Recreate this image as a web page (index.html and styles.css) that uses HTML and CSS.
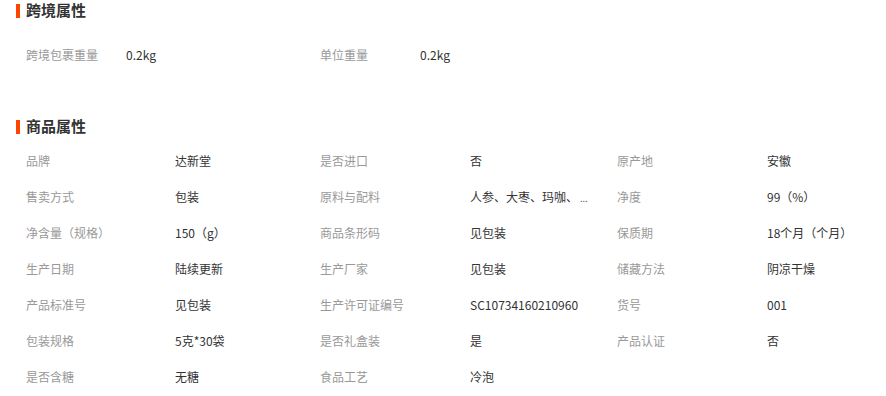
FILE: index.html
```html
<!DOCTYPE html>
<html lang="zh-CN">
<head>
<meta charset="utf-8">
<title>属性</title>
<link rel="stylesheet" href="styles.css">
</head>
<body>
<section class="sec sec-cross">
  <h2 class="sec-title"><span class="bar"></span><span class="sec-text">跨境属性</span></h2>
  <div class="grid grid-cross">
    <span class="lbl">跨境包裹重量</span><span class="val">0.2kg</span>
    <span class="lbl">单位重量</span><span class="val">0.2kg</span>
  </div>
</section>
<section class="sec sec-goods">
  <h2 class="sec-title"><span class="bar"></span><span class="sec-text">商品属性</span></h2>
  <div class="grid grid-goods">
    <span class="lbl">品牌</span><span class="val">达新堂</span>
    <span class="lbl">是否进口</span><span class="val">否</span>
    <span class="lbl">原产地</span><span class="val">安徽</span>

    <span class="lbl">售卖方式</span><span class="val">包装</span>
    <span class="lbl">原料与配料</span><span class="val">人参、大枣、玛咖、<span class="dots">...</span></span>
    <span class="lbl">净度</span><span class="val">99（%）</span>

    <span class="lbl">净含量（规格）</span><span class="val">150（g）</span>
    <span class="lbl">商品条形码</span><span class="val">见包装</span>
    <span class="lbl">保质期</span><span class="val">18个月（个月）</span>

    <span class="lbl">生产日期</span><span class="val">陆续更新</span>
    <span class="lbl">生产厂家</span><span class="val">见包装</span>
    <span class="lbl">储藏方法</span><span class="val">阴凉干燥</span>

    <span class="lbl">产品标准号</span><span class="val">见包装</span>
    <span class="lbl">生产许可证编号</span><span class="val">SC10734160210960</span>
    <span class="lbl">货号</span><span class="val">001</span>

    <span class="lbl">包装规格</span><span class="val">5克*30袋</span>
    <span class="lbl">是否礼盒装</span><span class="val">是</span>
    <span class="lbl">产品认证</span><span class="val">否</span>

    <span class="lbl">是否含糖</span><span class="val">无糖</span>
    <span class="lbl">食品工艺</span><span class="val">冷泡</span>
  </div>
</section>
</body>
</html>
```
FILE: styles.css
```css
html, body {
  margin: 0;
  padding: 0;
  background: #fff;
}
body {
  width: 886px;
  height: 396px;
  overflow: hidden;
  font-family: "Noto Sans CJK SC", "Noto Sans", sans-serif;
  font-size: 12px;
  color: #333;
}
.sec-title {
  margin: 0;
  padding-left: 16px;
  height: 22px;
  display: flex;
  align-items: center;
  gap: 6px;
  font-size: 15px;
  font-weight: bold;
  color: #333;
}
.sec-text {
  line-height: 20px;
  padding-bottom: 3px;
}
.bar {
  width: 4px;
  height: 14px;
  margin-bottom: 1px;
  background: #ff4400;
}
.grid {
  display: grid;
  padding-left: 26px;
  grid-auto-rows: 36px;
  align-items: center;
}
.grid-cross {
  margin-top: 14px;
  grid-template-columns: 100px 194px 100px 1fr;
}
.sec-goods {
  margin-top: 44px;
}
.grid-goods {
  margin-top: 4px;
  grid-template-columns: 149px 145px 150px 147px 150px 1fr;
}
.lbl {
  color: #999;
  white-space: nowrap;
}
.val {
  color: #333;
  white-space: nowrap;
}
.dots {
  font-size: 9px;
  margin-left: 2px;
  color: #555;
}
```
